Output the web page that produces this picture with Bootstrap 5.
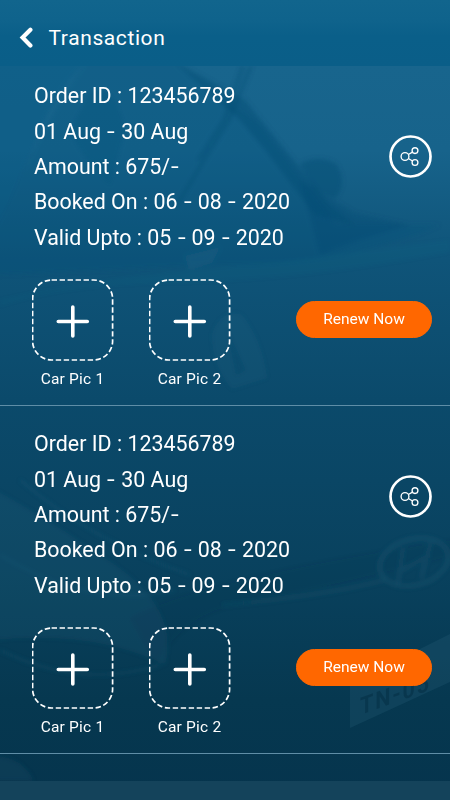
<!DOCTYPE html>
<html lang="en">
<head>
<meta charset="utf-8">
<meta name="viewport" content="width=device-width, initial-scale=1">
<title>Transaction</title>
<link href="https://cdn.jsdelivr.net/npm/bootstrap@5.3.0/dist/css/bootstrap.min.css" rel="stylesheet">
<style>
body{font-family:Roboto,"Liberation Sans",sans-serif;background:#083f5c}
.screen{height:800px;background:linear-gradient(#18658d 66px,#17638b 150px,#0f5479 260px,#0b4a6b 400px,#09425f 560px,#063850 700px,#05344d)}
.backdrop{z-index:0}
.topbar{height:66px;padding:10px 0 0 18.5px;background:linear-gradient(#11658d,#0f638c 20px,#0a5f89 36px,#0a5e88)}
.topbar h1{font-size:21px;letter-spacing:.6px;margin:2px 0 0 15px}
.order{border-bottom:1px solid #5f8ea7;padding-left:34px;padding-right:18px}
.order-a{height:340px;padding-top:12.2px}
.order-b{height:348px;padding-top:20.2px}
.details li{font-size:21.4px;line-height:35.4px;white-space:nowrap}
.dash{display:inline-block;width:9.6px;text-align:center;transform:scaleX(1.3)}
.share-a{margin-top:56.8px}
.share-b{margin-top:49.3px}
.pics{margin-left:-2px;margin-top:23.3px;gap:35px}
.pic-label{font-size:15.5px;letter-spacing:.2px;line-height:18px;margin-top:9px;margin-left:-1px}
.btn-renew{--bs-btn-color:#fff;--bs-btn-bg:#ff6700;--bs-btn-border-color:#ff6700;--bs-btn-hover-bg:#e65c00;--bs-btn-hover-color:#fff;width:136px;height:37px;padding:2px 0 0;font-size:15.5px;margin-top:22px}
.bottombar{height:19px;background:#14435b}
</style>
</head>
<body>
<main class="screen position-relative d-flex flex-column overflow-hidden text-white">
<svg class="backdrop position-absolute top-0 start-0" width="450" height="800" viewBox="0 0 450 800" aria-hidden="true">
<defs><filter id="soft"><feGaussianBlur stdDeviation="2"/></filter></defs>
<g filter="url(#soft)">
<path d="M-5 60H88Q55 92 38 135T-5 230Z" fill="#085680" opacity=".3"/>
<path d="M88 60H172L260 125L335 225L440 225Q350 265 220 265L-5 275V230Q55 100 88 60Z" fill="#075078" opacity=".24"/>
<path d="M92 90Q116 85 125 130L110 185Q70 145 72 126Z" fill="#07527c" opacity=".25"/>
<path d="M172 60L245 100L330 205L355 225L315 215L265 150L240 120Z" fill="#064c73" opacity=".4"/>
<path d="M251 66L229 120L207 155L176 207M243 66L224 120L198 160" fill="none" stroke="#064b72" stroke-width="3" opacity=".45"/>
<path d="M300 164Q320 153 337 165Q348 183 335 199L315 190Z" fill="#064a70" opacity=".4"/>
<path d="M300 180L355 213L410 225Q355 240 320 255Z" fill="#064a70" opacity=".3"/>
<path d="M0 300Q90 280 195 270T450 240V252Q300 280 180 282T0 306Z" fill="#3780a0" opacity=".06"/>
<path d="M185 256L220 247L212 263L189 270Z" fill="#3e7e9d" opacity=".13"/>
<path d="M212 334Q222 308 242 315Q262 340 267 378L232 389Q212 365 212 334ZM226 326L246 370L236 376Z" fill="#3e7893" fill-rule="evenodd" opacity=".11"/>
<path d="M-5 490Q50 520 115 565T165 665Q95 630 -5 640" fill="#2b6684" opacity=".17"/>
<path d="M20 480Q90 540 190 575M0 650Q80 690 160 665M0 555Q90 610 175 590" fill="none" stroke="#3b7897" stroke-width="2" opacity=".18"/>
<path d="M130 618Q200 580 455 540V555Q280 598 225 607Q180 620 155 665Z" fill="#052f49" opacity=".12"/>
<path d="M222 605Q330 595 385 580" fill="none" stroke="#31677f" stroke-width="3" opacity=".2"/>
<ellipse cx="414" cy="562" rx="35" ry="23" transform="rotate(-15 414 562)" fill="none" stroke="#3a718b" stroke-width="4" opacity=".2"/>
<path d="M403 548L398 584M431 542L421 578M402 570L430 555" fill="none" stroke="#3a718b" stroke-width="4" opacity=".17"/>
<path d="M-5 756Q23 757 34 781H-5Z" fill="#245871" opacity=".2"/>
</g>
<path d="M350 684L450 634V682L350 728Z" fill="#28617a" opacity=".27"/>
<text transform="matrix(.9 -.32 0 1 360 715)" font-family="Roboto, sans-serif" font-weight="700" font-size="24" letter-spacing="2" fill="#052e45" opacity=".55">TN-05</text>
</svg>

<header class="topbar position-relative flex-shrink-0 d-flex align-items-center">
<svg width="15" height="22" viewBox="0 0 15 22" fill="none" stroke="#fff" stroke-width="4.2" stroke-linecap="round" role="img" aria-label="Back"><path d="M11.4 2.8L3.6 10.600L11.4 18.400"/></svg>
<h1 class="fw-normal">Transaction</h1>
</header>

<section class="order order-a position-relative flex-shrink-0">
<div class="d-flex justify-content-between align-items-start">
<ul class="details list-unstyled mb-0">
<li>Order ID : 123456789</li><li>01 Aug <span class="dash">-</span> 30 Aug</li><li>Amount : 675/<span class="dash">-</span></li><li>Booked On : 06 <span class="dash">-</span> 08 <span class="dash">-</span> 2020</li><li>Valid Upto : 05 <span class="dash">-</span> 09 <span class="dash">-</span> 2020</li>
</ul>
<svg class="share-a flex-shrink-0" width="43" height="43" viewBox="0 0 43 43" fill="none" stroke="#fff" role="img" aria-label="Share"><circle cx="21.5" cy="21.5" r="20" stroke-width="2.7"/><g stroke-width="1.35"><circle cx="16" cy="21.5" r="3.9"/><circle cx="26" cy="15.6" r="2.9"/><circle cx="26" cy="27.5" r="2.9"/><path d="M19.4 19.5L23.5 17.1M19.4 23.5L23.5 26"/></g></svg>
</div>
<div class="pics d-flex align-items-start">
<div class="text-center"><svg class="d-block" width="82" height="82" viewBox="0 0 82 82" fill="none" stroke="#fff"><rect x=".6" y="1" width="80" height="80" rx="19" stroke-width="1.7" stroke-dasharray="5.4 2.59"/><path d="M40.800 28V57M26.300 42.500H55.300" stroke-width="3.6" stroke-linecap="round"/></svg><div class="pic-label">Car Pic 1</div></div>
<div class="text-center"><svg class="d-block" width="82" height="82" viewBox="0 0 82 82" fill="none" stroke="#fff"><rect x=".6" y="1" width="80" height="80" rx="19" stroke-width="1.7" stroke-dasharray="5.4 2.59"/><path d="M40.800 28V57M26.300 42.500H55.300" stroke-width="3.6" stroke-linecap="round"/></svg><div class="pic-label">Car Pic 2</div></div>
<button type="button" class="btn btn-renew rounded-pill ms-auto">Renew Now</button>
</div>
</section>

<section class="order order-b position-relative flex-shrink-0">
<div class="d-flex justify-content-between align-items-start">
<ul class="details list-unstyled mb-0">
<li>Order ID : 123456789</li><li>01 Aug <span class="dash">-</span> 30 Aug</li><li>Amount : 675/<span class="dash">-</span></li><li>Booked On : 06 <span class="dash">-</span> 08 <span class="dash">-</span> 2020</li><li>Valid Upto : 05 <span class="dash">-</span> 09 <span class="dash">-</span> 2020</li>
</ul>
<svg class="share-b flex-shrink-0" width="43" height="43" viewBox="0 0 43 43" fill="none" stroke="#fff" role="img" aria-label="Share"><circle cx="21.5" cy="21.5" r="20" stroke-width="2.7"/><g stroke-width="1.35"><circle cx="16" cy="21.5" r="3.9"/><circle cx="26" cy="15.6" r="2.9"/><circle cx="26" cy="27.5" r="2.9"/><path d="M19.4 19.5L23.5 17.1M19.4 23.5L23.5 26"/></g></svg>
</div>
<div class="pics d-flex align-items-start">
<div class="text-center"><svg class="d-block" width="82" height="82" viewBox="0 0 82 82" fill="none" stroke="#fff"><rect x=".6" y="1" width="80" height="80" rx="19" stroke-width="1.7" stroke-dasharray="5.4 2.59"/><path d="M40.800 28V57M26.300 42.500H55.300" stroke-width="3.6" stroke-linecap="round"/></svg><div class="pic-label">Car Pic 1</div></div>
<div class="text-center"><svg class="d-block" width="82" height="82" viewBox="0 0 82 82" fill="none" stroke="#fff"><rect x=".6" y="1" width="80" height="80" rx="19" stroke-width="1.7" stroke-dasharray="5.4 2.59"/><path d="M40.800 28V57M26.300 42.500H55.300" stroke-width="3.6" stroke-linecap="round"/></svg><div class="pic-label">Car Pic 2</div></div>
<button type="button" class="btn btn-renew rounded-pill ms-auto">Renew Now</button>
</div>
</section>
<footer class="bottombar position-relative mt-auto"></footer>
</main>
<script src="https://cdn.jsdelivr.net/npm/bootstrap@5.3.0/dist/js/bootstrap.bundle.min.js"></script>
</body>
</html>
